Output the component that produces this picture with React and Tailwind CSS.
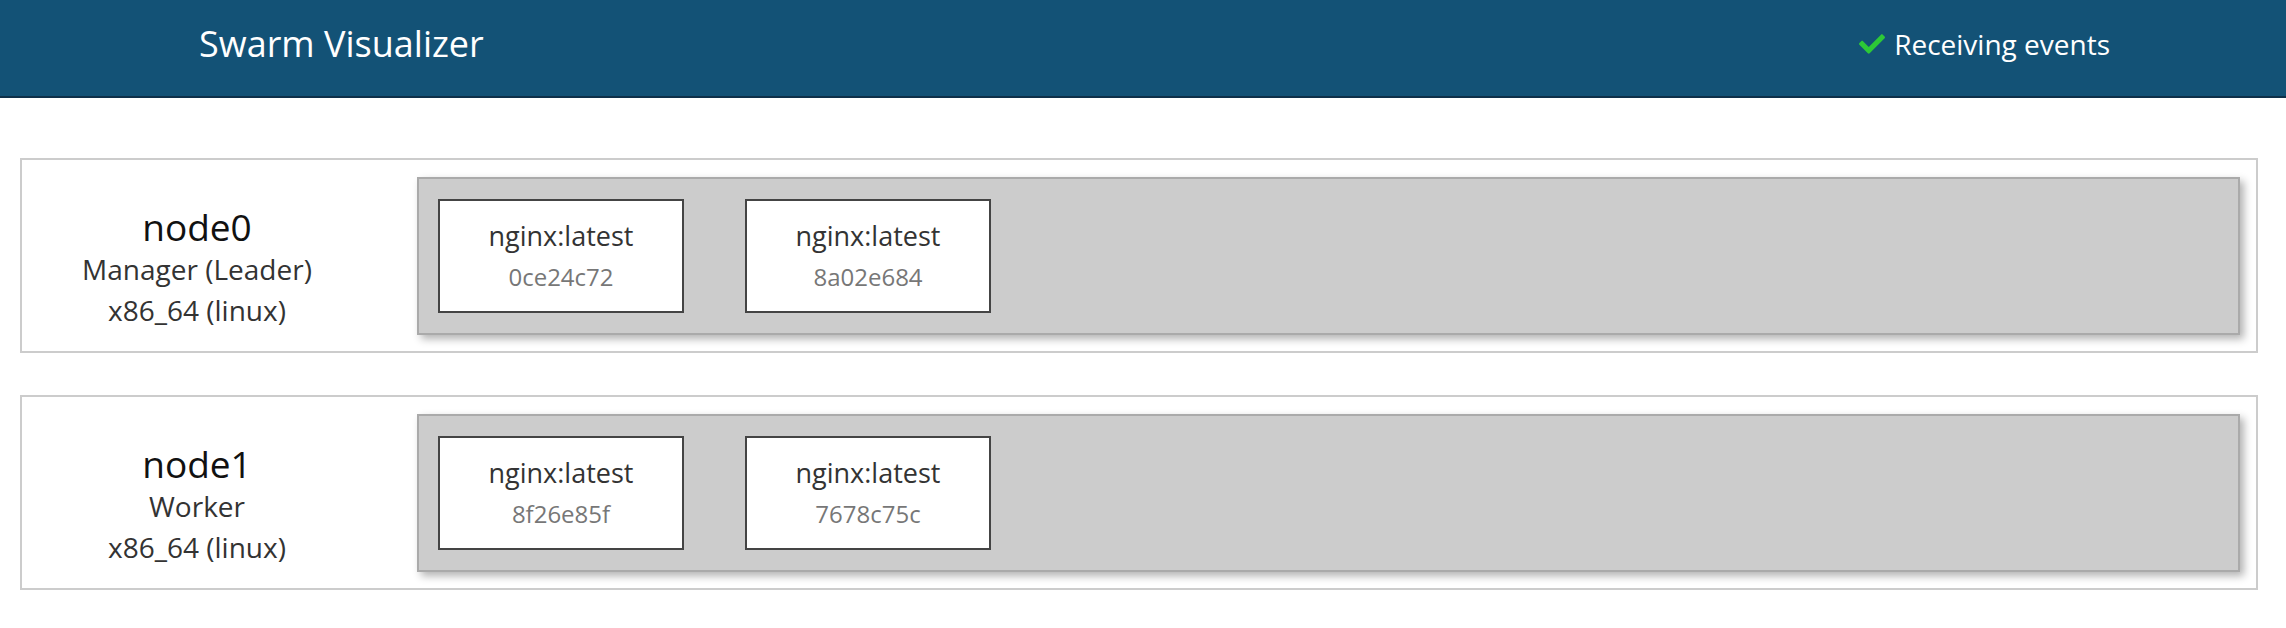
import { FaCheck } from 'react-icons/fa';

const nodes = [
    { name: 'node0', role: 'Manager (Leader)', platform: 'x86_64 (linux)', tasks: [{ image: 'nginx:latest', id: '0ce24c72' }, { image: 'nginx:latest', id: '8a02e684' }] },
    { name: 'node1', role: 'Worker', platform: 'x86_64 (linux)', tasks: [{ image: 'nginx:latest', id: '8f26e85f' }, { image: 'nginx:latest', id: '7678c75c' }] },
];

function Task({ task }) {
    return (
        <div className="w-[246px] h-[114px] bg-white border-2 border-[#444] flex flex-col items-center justify-center">
            <div className="text-[27px] leading-[38px] text-[#333]">{task.image}</div>
            <div className="text-[24px] leading-[38px] mt-[3px] text-[#777]">{task.id}</div>
        </div>
    );
}

function Node({ node }) {
    return (
        <div className="ml-[20px] w-[2238px] border-2 border-[#ccc] flex pt-[17px] pb-[16px]">
            <div className="w-[350px] flex flex-col items-center justify-center pt-[24px]">
                <div className="text-[37px] leading-[44px] text-[#111]">{node.name}</div>
                <div className="text-[28px] leading-[41px] text-[#333]">{node.role}</div>
                <div className="text-[28px] leading-[41px] text-[#333]">{node.platform}</div>
            </div>
            <div className="ml-[45px] w-[1823px] h-[158px] bg-[#ccc] border-2 border-[#aaa] shadow-[4px_4px_8px_rgba(0,0,0,0.3)] flex gap-[61px] pt-[20px] pl-[19px]">
                {node.tasks.map((t) => <Task key={t.id} task={t} />)}
            </div>
        </div>
    );
}

export default function App() {
    return (
        <div className="w-[2286px] h-[628px] bg-white" style={{ fontFamily: '"Open Sans", "Noto Sans", sans-serif' }}>
            {/* header */}
            <div className="h-[98px] bg-[#135276] border-b-2 border-[#0e3049] flex items-center justify-between pl-[199px] pr-[176px] pb-[8px] text-white">
                <div className="text-[36px]">Swarm Visualizer</div>
                <div className="flex items-center text-[28px]">
                    <FaCheck className="text-[#2dc937] mr-[9px]" size={26} />
                    <span>Receiving events</span>
                </div>
            </div>

            {/* nodes */}
            <div className="pt-[60px] flex flex-col gap-[42px]">
                {nodes.map((n) => <Node key={n.name} node={n} />)}
            </div>
        </div>
    );
}
